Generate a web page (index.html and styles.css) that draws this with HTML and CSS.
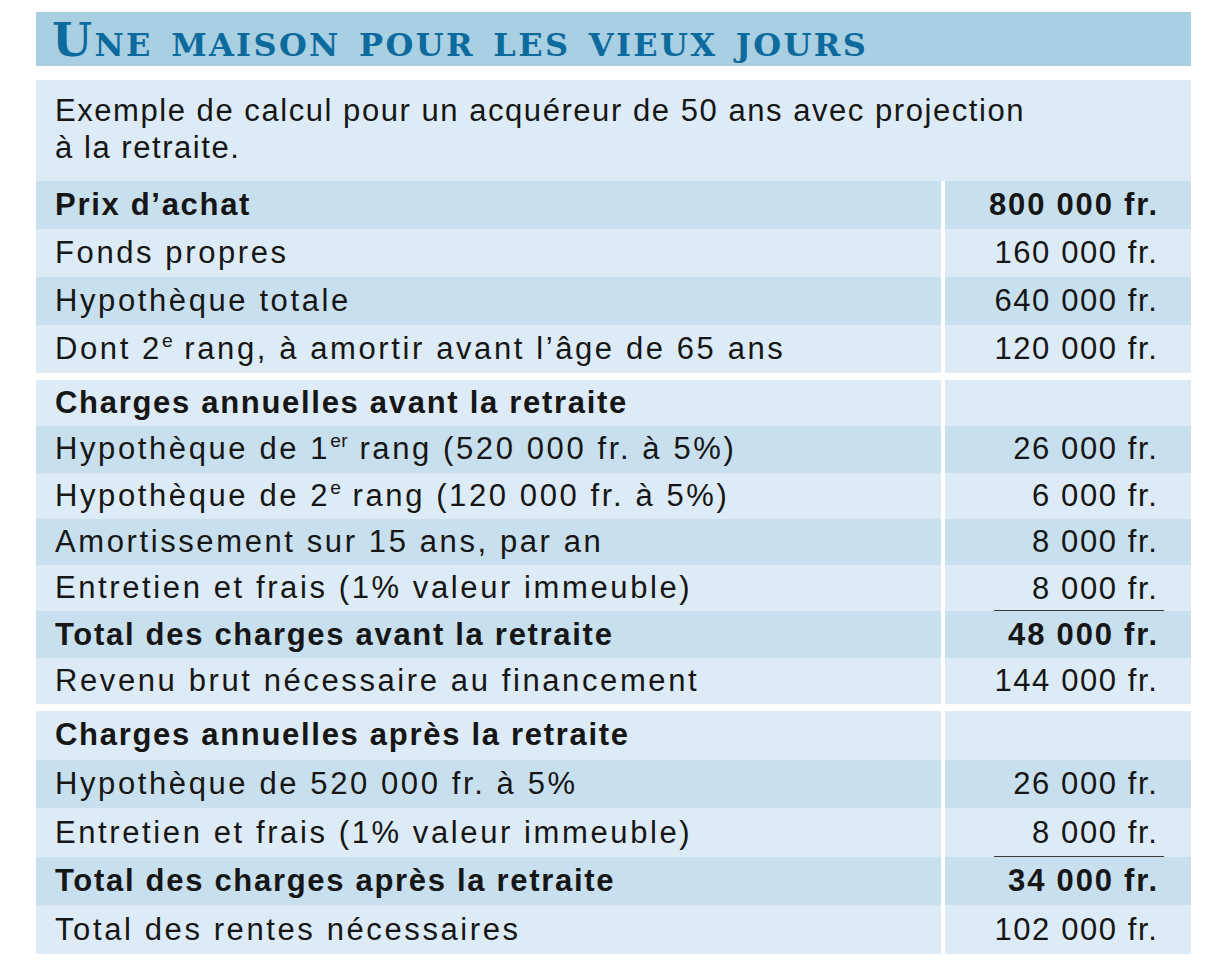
FILE: index.html
```html
<!DOCTYPE html>
<html lang="fr">
<head>
<meta charset="utf-8">
<title>Une maison pour les vieux jours</title>
<link rel="stylesheet" href="styles.css">
</head>
<body>
<div class="page">
  <h1 class="title">Une maison pour les vieux jours</h1>
  <p class="intro">Exemple de calcul pour un acquéreur de 50 ans avec projection<br>à la retraite.</p>

  <div class="sec sec1">
    <div class="row dark b"><div class="lab"><span>Prix d’achat</span></div><div class="val"><span class="num">800 000 fr.</span></div></div>
    <div class="row"><div class="lab"><span>Fonds propres</span></div><div class="val"><span class="num">160 000 fr.</span></div></div>
    <div class="row dark"><div class="lab"><span>Hypothèque totale</span></div><div class="val"><span class="num">640 000 fr.</span></div></div>
    <div class="row"><div class="lab"><span>Dont 2<sup class="sup">e</sup> rang, à amortir avant l’âge de 65 ans</span></div><div class="val"><span class="num">120 000 fr.</span></div></div>
  </div>

  <div class="sec sec2">
    <div class="row b"><div class="lab"><span>Charges annuelles avant la retraite</span></div><div class="val"></div></div>
    <div class="row dark"><div class="lab"><span>Hypothèque de 1<sup class="sup">er</sup> rang (520 000 fr. à 5%)</span></div><div class="val"><span class="num">26 000 fr.</span></div></div>
    <div class="row"><div class="lab"><span>Hypothèque de 2<sup class="sup">e</sup> rang (120 000 fr. à 5%)</span></div><div class="val"><span class="num">6 000 fr.</span></div></div>
    <div class="row dark"><div class="lab"><span>Amortissement sur 15 ans, par an</span></div><div class="val"><span class="num">8 000 fr.</span></div></div>
    <div class="row"><div class="lab"><span>Entretien et frais (1% valeur immeuble)</span></div><div class="val ruled"><span class="num">8 000 fr.</span></div></div>
    <div class="row dark b"><div class="lab"><span>Total des charges avant la retraite</span></div><div class="val"><span class="num">48 000 fr.</span></div></div>
    <div class="row"><div class="lab"><span>Revenu brut nécessaire au financement</span></div><div class="val"><span class="num">144 000 fr.</span></div></div>
  </div>

  <div class="sec sec3">
    <div class="row b"><div class="lab"><span>Charges annuelles après la retraite</span></div><div class="val"></div></div>
    <div class="row dark"><div class="lab"><span>Hypothèque de 520 000 fr. à 5%</span></div><div class="val"><span class="num">26 000 fr.</span></div></div>
    <div class="row"><div class="lab"><span>Entretien et frais (1% valeur immeuble)</span></div><div class="val ruled"><span class="num">8 000 fr.</span></div></div>
    <div class="row dark b"><div class="lab"><span>Total des charges après la retraite</span></div><div class="val"><span class="num">34 000 fr.</span></div></div>
    <div class="row"><div class="lab"><span>Total des rentes nécessaires</span></div><div class="val"><span class="num">102 000 fr.</span></div></div>
  </div>
</div>
</body>
</html>
```

FILE: styles.css
```css
* { box-sizing: border-box; }

body {
  margin: 0;
  background: #ffffff;
  color: #161616;
  font-family: "Liberation Sans", Arial, sans-serif;
}

.page {
  width: 1212px;
  padding: 12px 21px 0 36px;
}

.title {
  margin: 0 0 14px;
  height: 54px;
  padding-left: 16px;
  padding-top: 2px;
  display: flex;
  align-items: center;
  background: #a9cfe3;
  color: #0d6a9d;
  font-family: "DejaVu Serif", "Liberation Serif", serif;
  font-weight: bold;
  font-variant: small-caps;
  font-size: 46px;
  line-height: 1;
  letter-spacing: 2.35px;
}

.intro {
  margin: 0;
  height: 101px;
  padding: 12px 19px 0;
  background: #dcebf5;
  font-size: 31px;
  line-height: 37px;
  letter-spacing: 1.55px;
}

.sec {
  display: flex;
  flex-direction: column;
}

.sec2, .sec3 { margin-top: 7px; }

.row {
  display: grid;
  grid-template-columns: 905px 246px;
  column-gap: 4px;
  height: 48px;
}

.sec2 .row { height: 46.3px; }
.sec3 .row { height: 48.6px; }

.lab, .val {
  background: #dcebf5;
  display: flex;
  align-items: center;
  font-size: 31px;
}

.row.dark .lab, .row.dark .val { background: #c8dfed; }

.lab {
  padding-left: 19px;
  letter-spacing: 2.6px;
  white-space: nowrap;
}

.val {
  justify-content: flex-end;
  padding-right: 27px;
}

.num {
  padding-right: 5.5px;
  letter-spacing: 1.6px;
  white-space: nowrap;
}

.row.b .lab, .row.b .val {
  font-weight: bold;
}

.row.b .lab { letter-spacing: 1.7px; }
.row.b .num { letter-spacing: 1.8px; padding-right: 5.2px; }

.val.ruled .num {
  align-self: stretch;
  width: 170px;
  display: flex;
  align-items: center;
  justify-content: flex-end;
  border-bottom: 1.5px solid #3a3a3a;
  padding-top: 1.5px;
}

.sup {
  font-size: 0.62em;
  line-height: 0;
  vertical-align: 0.6em;
  letter-spacing: 0.5px;
}
```
